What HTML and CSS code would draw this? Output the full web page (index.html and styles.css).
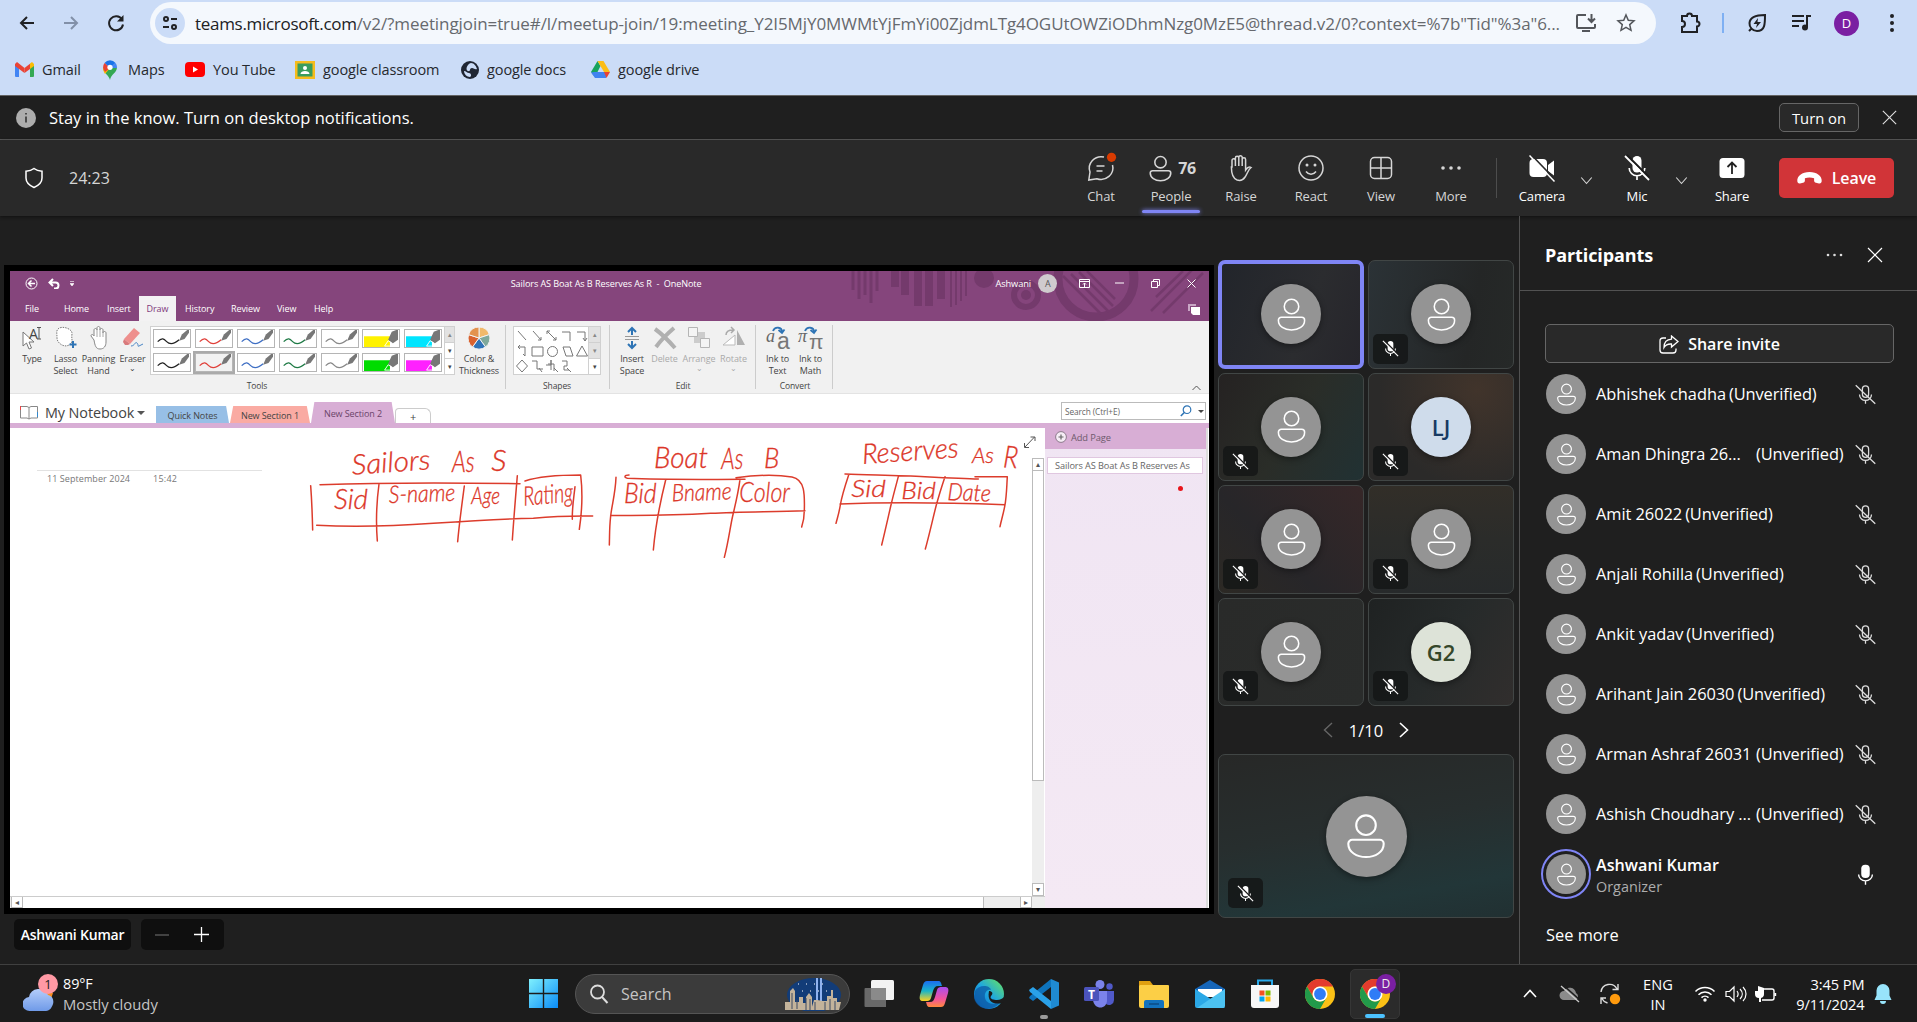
FILE: index.html
```html
<!DOCTYPE html>
<html lang="en">
<head>
<meta charset="utf-8">
<title>Microsoft Teams meeting</title>
<link rel="stylesheet" href="styles.css">
</head>
<body>
<svg class="defs" width="0" height="0" aria-hidden="true">
  <defs>
    <symbol id="person" viewBox="0 0 24 24"><g fill="none" stroke="currentColor"><circle cx="12" cy="6.8" r="4.7"/><path d="M5.4 13.8h13.2a1.9 1.9 0 0 1 1.9 1.9c0 4-4 6.4-8.5 6.4s-8.5-2.4-8.5-6.4a1.9 1.9 0 0 1 1.9-1.9z"/></g></symbol>
    <symbol id="mic-off" viewBox="0 0 20 20"><path fill="currentColor" d="M10 2a3 3 0 0 1 3 3v5a3 3 0 0 1-6 0V5a3 3 0 0 1 3-3z"/><path fill="none" stroke="currentColor" stroke-width="1.1" d="M4.8 10a5.2 5.2 0 0 0 10.4 0M10 15.2V18"/><path stroke="#1b1b1b" stroke-width="1.4" d="M3.2 1.3l15 15"/><path stroke="currentColor" stroke-width="1.2" d="M2 2l16 16"/></symbol>
    <symbol id="mic-off-line" viewBox="0 0 20 20"><g fill="none" stroke="currentColor" stroke-width="1.1"><rect x="7.3" y="2.5" width="5.4" height="10" rx="2.7"/><path d="M4.8 10a5.2 5.2 0 0 0 10.4 0M10 15.2V18M1.5 2l17 16"/></g></symbol>
    <symbol id="close" viewBox="0 0 20 20"><path fill="none" stroke="currentColor" stroke-width="1.2" d="M3 3l14 14M17 3L3 17"/></symbol>
    <symbol id="chev-down" viewBox="0 0 20 20"><path fill="none" stroke="currentColor" stroke-width="1.5" d="M3 6l7 8 7-8"/></symbol>
    <symbol id="pen" viewBox="0 0 38 19"><path fill="none" stroke="currentColor" stroke-width="1.4" d="M3 13c5-5 7-3 10 0s8 3 14-2"/><path fill="#777" d="M27 12l3-7 6-5h2v3l-5 7z"/></symbol>
    <symbol id="marker" viewBox="0 0 38 19"><path fill="currentColor" d="M0 7h29v12H0z"/><path fill="#777" d="M27 11l4-9 5-2h2v11l-6 4z"/><path fill="none" stroke="#fff" stroke-width="1" d="M27 12l-4 6h8l1-3z"/></symbol>
    <symbol id="chrome" viewBox="0 0 30 30"><circle cx="15" cy="15" r="15" fill="#fbc116"/><path fill="#e33b2e" d="M2 7.500a15 15 0 0 1 26 0H15a7.500 7.500 0 0 0-6.500 11.200z"/><path fill="#229a4a" d="M2 7.500A15 15 0 0 0 15 30l6.500-11.250a7.500 7.500 0 0 1-13 0z"/><circle cx="15" cy="15" r="7.500" fill="#fff"/><circle cx="15" cy="15" r="5.900" fill="#2f7cf6"/></symbol>
    <linearGradient id="sky" x1="0" y1="0" x2="1" y2="1"><stop offset="0" stop-color="#7ff0fd"/><stop offset="1" stop-color="#0a8cf8"/></linearGradient>
    <linearGradient id="edge" x1="0" y1="1" x2="1" y2="0"><stop offset="0" stop-color="#0b62c4"/><stop offset=".5" stop-color="#1ea7e0"/><stop offset="1" stop-color="#6be65a"/></linearGradient>
    <linearGradient id="cop1" x1="0" y1="0" x2="0" y2="1"><stop offset="0" stop-color="#1a6df0"/><stop offset=".5" stop-color="#19b5c8"/><stop offset="1" stop-color="#ffd21e"/></linearGradient>
    <linearGradient id="cop2" x1="0" y1="0" x2="0" y2="1"><stop offset="0" stop-color="#a94df0"/><stop offset=".6" stop-color="#f2539b"/><stop offset="1" stop-color="#ff8a3c"/></linearGradient>
    <linearGradient id="cloud" x1="0" y1="0" x2="0" y2="1"><stop offset="0" stop-color="#b4cdfa"/><stop offset="1" stop-color="#6f9ae8"/></linearGradient>
  </defs>
</svg>

<header class="chrome">
  <div class="omni-row">
    <span class="cell"><svg width="18" height="18" viewBox="0 0 18 18"><path d="M16 9H3M9 3L3 9l6 6" class="ln ln2"/></svg></span>
    <span class="cell dim"><svg width="18" height="18" viewBox="0 0 18 18"><path d="M2 9h13M9 3l6 6-6 6" class="ln ln2"/></svg></span>
    <span class="cell reload"><svg width="20" height="20" viewBox="0 0 20 20"><path d="M16 6.500A7 7 0 1 0 17 11.500" class="ln ln2"/><path d="M17.500 2v6.500H11z" fill="currentColor"/></svg></span>
    <div class="pill">
      <span class="tune"><svg width="18" height="18" viewBox="0 0 18 18"><g class="ln ln2"><circle cx="5" cy="5" r="2"/><path d="M10 5h6M2 13h6"/><circle cx="13" cy="13" r="2"/></g></svg></span>
      <span class="url"><b>teams.microsoft.com</b>/v2/?meetingjoin=true#/l/meetup-join/19:meeting_Y2I5MjY0MWMtYjFmYi00ZjdmLTg4OGUtOWZiODhmNzg0MzE5@thread.v2/0?context=%7b"Tid"%3a"6...</span>
      <span class="pill-ic"><svg width="22" height="20" viewBox="0 0 22 20"><path d="M11 2H3a1 1 0 0 0-1 1v11a1 1 0 0 0 1 1h16a1 1 0 0 0 1-1v-3M7 18h8M16.500 1v7M13 5.500l3.500 3.500L20 5.500" class="ln ln2"/></svg></span>
      <span class="pill-ic"><svg width="20" height="20" viewBox="0 0 20 20"><path d="M10 2l2.300 5.300 5.700.5-4.300 3.800 1.300 5.700-5-3-5 3 1.300-5.700L2 7.800l5.700-.5z" class="ln ln15"/></svg></span>
    </div>
    <span class="cell ext"><svg width="24" height="24" viewBox="0 0 24 24"><path d="M4 5h5a2.500 2.500 0 0 1 5 0h5v5.500a2.500 2.500 0 0 1 0 5V21H4v-5a3 3 0 0 0 0-6z" class="ln ln2"/></svg></span>
    <span class="vline"></span>
    <span class="cell"><svg width="22" height="22" viewBox="0 0 22 22"><path d="M19 3c0 9 0 16-8 16a7.500 7.500 0 0 1-7.500-8C4 5 10 3 19 3zM3 19l3-3" class="ln ln2"/><path d="M12 6l-4.500 6H11l-1 4 5-6h-3.500z" fill="currentColor"/></svg></span>
    <span class="cell"><svg width="22" height="20" viewBox="0 0 22 20"><path d="M1 3h12M1 8h12M1 13h7M16 14V3h4" class="ln ln2"/><circle cx="14" cy="14.500" r="3" fill="currentColor"/></svg></span>
    <span class="cell"><span class="me">D</span></span>
    <span class="cell"><svg width="6" height="20" viewBox="0 0 6 20" fill="currentColor"><circle cx="3" cy="3" r="2"/><circle cx="3" cy="10" r="2"/><circle cx="3" cy="17" r="2"/></svg></span>
  </div>
  <nav class="bookmarks">
    <a class="bm gmail"><svg width="19" height="15" viewBox="0 0 19 15"><path fill="#4285f4" d="M0 3h4v12H1a1 1 0 0 1-1-1z"/><path fill="#34a853" d="M15 3h4v11a1 1 0 0 1-1 1h-3z"/><path fill="#ea4335" d="M0 2l2-2 7.500 6V11L0 4z"/><path fill="#ea4335" d="M15 1.700V7l-5.500 4V6z"/><path fill="#fbbc04" d="M15 1.600L17 0l2 2v2l-4 3z"/></svg>Gmail</a>
    <a class="bm maps"><svg width="16" height="20" viewBox="0 0 16 20"><path fill="#34a853" d="M8 20c-1-5-7-7-7-12.500L15 7c0 6-6 7-7 13z"/><path fill="#1a73e8" d="M2.500 3A7 7 0 0 1 13.500 3L8 8z"/><path fill="#fbbc04" d="M1 7.500L8 8l-5 6C1.500 11.500 1 9.500 1 7.500z"/><path fill="#ea4335" d="M2.600 3L8 8l-5 4C.5 8 .7 5.500 2.600 3z"/><path fill="#4285f4" d="M13.500 3c1 1.500 1.600 2.500 1.500 5L8 8z"/><circle cx="8" cy="7.300" r="2.600" fill="#fff"/></svg>Maps</a>
    <a class="bm yt"><svg width="20" height="15" viewBox="0 0 20 15"><rect width="20" height="15" rx="4" fill="#f00"/><path fill="#fff" d="M8 4.500l5 3-5 3z"/></svg>You Tube</a>
    <a class="bm cls"><svg width="20" height="18" viewBox="0 0 20 18"><path fill="#f6bc1c" d="M0 0h20v18H0z"/><path fill="#3a9d5d" d="M2.500 2.500h15v13h-15z"/><circle cx="10" cy="7" r="2" fill="#fff"/><path fill="#fff" d="M5.500 13c0-4 9-4 9 0z"/></svg>google classroom</a>
    <a class="bm docs"><svg width="18" height="18" viewBox="0 0 18 18"><circle cx="9" cy="9" r="9" fill="#202633"/><path fill="#cbdcf7" d="M10 2c3 0 5 3 6 6-2 1-3-1-5-1-3 0-1 4-4 3S6 3 10 2zM3 10c2 0 3 2 5 2s3 3 1 4c-3 0-6-3-6-6z"/></svg>google docs</a>
    <a class="bm drv"><svg width="19" height="17" viewBox="0 0 19 17"><path fill="#18a35d" d="M6.500 0L9.500 5 4 16 0 11z"/><path fill="#fcbd17" d="M6.500 0H12.500L19 11H13z"/><path fill="#4183f0" d="M3.500 11H15.500L15 17H4L0 11.500z"/><path fill="#e94335" d="M13 11h6l-3.500 6z"/></svg>google drive</a>
  </nav>
</header>

<div class="notice">
  <svg class="info" width="20" height="20" viewBox="0 0 20 20"><circle cx="10" cy="10" r="10" fill="#adadad"/><path d="M10 8.500v6M10 5v1.500" stroke="#222" stroke-width="1.400"/></svg>
  <span class="notice-text">Stay in the know. Turn on desktop notifications.</span>
  <button class="turn-on">Turn on</button>
  <svg class="x" width="19" height="19"><use href="#close"/></svg>
</div>

<div class="bar">
  <svg class="shield" width="20" height="22" viewBox="0 0 20 22"><path d="M10 1.500c2.500 2 5 2.500 8 2.700V11c0 4.500-3.500 7.500-8 9.500-4.500-2-8-5-8-9.500V4.200c3-.2 5.500-.7 8-2.700z" fill="none" stroke="#fff" stroke-width="1.500"/></svg>
  <span class="timer">24:23</span>
  <div class="btn"><span class="ic"><svg width="28" height="28" viewBox="0 0 28 28"><g class="ln ln15"><path d="M17 3A12 11.500 0 0 0 3 18L1.800 26l8-1.300A12 11.500 0 0 0 25.500 11M9.500 12h8M9.500 17h6"/></g><circle cx="24.500" cy="3.300" r="4.600" fill="#d83b01"/></svg></span>Chat</div>
  <div class="btn on"><span class="ic"><svg width="29" height="29" stroke-width="1.300"><use href="#person"/></svg><b>76</b></span>People</div>
  <div class="btn"><span class="ic"><svg width="26" height="28" viewBox="0 0 26 28"><path class="ln ln15" d="M4 13V6.500a1.700 1.700 0 0 1 3.400 0V12 4a1.700 1.700 0 0 1 3.400 0v8V3.500a1.700 1.700 0 0 1 3.400 0V12 5.500a1.700 1.700 0 0 1 3.400 0V16c2-3 4-3.500 5.500-2.500-3 2-3.500 6-6 9.500-2 3-5 4-8 3-4-1.500-5.700-6-5.700-13z"/></svg></span>Raise</div>
  <div class="btn"><span class="ic"><svg width="28" height="28" viewBox="0 0 28 28"><circle cx="14" cy="14" r="12" class="ln ln15"/><path d="M9 17.500c2.500 3.500 7.500 3.500 10 0" class="ln ln15"/><circle cx="10" cy="11" r="1.500" fill="currentColor"/><circle cx="18" cy="11" r="1.500" fill="currentColor"/></svg></span>React</div>
  <div class="btn"><span class="ic"><svg width="24" height="24" viewBox="0 0 24 24"><rect x="1.500" y="1.500" width="21" height="21" rx="4" class="ln ln15"/><path d="M12 2v20M2 12h20" class="ln ln15"/></svg></span>View</div>
  <div class="btn"><span class="ic"><svg width="22" height="6" viewBox="0 0 22 6" fill="currentColor"><circle cx="3" cy="3" r="1.800"/><circle cx="11" cy="3" r="1.800"/><circle cx="19" cy="3" r="1.800"/></svg></span>More</div>
  <span class="sep"></span>
  <div class="btn lit"><span class="ic"><svg width="28" height="28" viewBox="0 0 28 28"><rect x="1.500" y="5" width="17.500" height="18" rx="4" fill="currentColor"/><path d="M20 11l6-4.500v15L20 17z" fill="currentColor"/><path d="M3 .5l25 26" stroke="#292929" stroke-width="1.800"/><path d="M1.500 1.500l25 26" stroke="currentColor" stroke-width="1.500"/></svg></span>Camera</div>
  <svg class="chev" width="15" height="15"><use href="#chev-down"/></svg>
  <div class="btn lit mic"><span class="ic"><svg width="30" height="30"><use href="#mic-off"/></svg></span>Mic</div>
  <svg class="chev" width="15" height="15"><use href="#chev-down"/></svg>
  <div class="btn lit share"><span class="ic"><svg width="26" height="22" viewBox="0 0 26 22"><rect x=".5" y="1" width="25" height="20" rx="3.500" fill="currentColor"/><path d="M13 17V6M8.500 10L13 5.500 17.500 10" stroke="#222" stroke-width="1.800" fill="none"/></svg></span>Share</div>
  <button class="leave"><svg width="25" height="13" viewBox="0 0 25 13"><path fill="#fff" d="M12.500 0C20 0 25 4 24.700 9c-.1 2-1.200 2.700-2.700 2.400l-3-.6c-1.300-.3-1.900-1-1.900-2.200V6.300c-3-1-6.200-1-9.200 0v2.300c0 1.200-.6 1.900-1.900 2.200l-3 .6C1.500 11.700.4 11 .3 9 0 4 5 0 12.500 0z"/></svg>Leave</button>
</div>

<main class="meeting">
  <section class="stage">
    <div class="frame">
      <div class="onenote">
        <div class="on-top">
          <svg class="deco" width="360" height="50" viewBox="0 0 360 50"><g fill="none" stroke="#743a6c"><path stroke-width="3" d="M2 0v19M8 0v28M14 0v24M20 0v32M26 0v20"/><path stroke-width="8" d="M44 0v16M54 0v24M67 0v35M78 0v35M90 0v28"/><path stroke-width="2" d="M100 0v36M105 0v34M110 0v30M115 0v25"/><circle cx="175" cy="24" r="12" stroke-width="6"/><circle cx="245" cy="8" r="38" stroke-width="9"/><path stroke-width="2.500" d="M212 5l38 38M220 3l38 38M228 1l34 34M236 0l28 28M300 40l42-42M312 42L352 2M305 26L332 0"/></g><circle cx="175" cy="24" r="5" fill="#743a6c"/><circle cx="133" cy="7" r="10" fill="#743a6c"/></svg>
          <div class="on-title">
            <span class="qa"><svg width="13" height="13" viewBox="0 0 13 13"><g fill="none" stroke="#fff"><circle cx="6.500" cy="6.500" r="5.500"/><path stroke-width="1.500" d="M10 6.500H3.500M6.500 3.500l-3 3 3 3"/></g></svg><svg width="12" height="11" viewBox="0 0 12 11"><path fill="none" stroke="#fff" stroke-width="2" d="M5 1L1.500 4.500 5 8M2 4.500h5.500a3 3 0 0 1 0 6H6"/></svg><svg width="4" height="5" viewBox="0 0 4 5"><path d="M0 .5h4M0 2.500h4L2 5z" fill="#fff" stroke="#fff" stroke-width=".6"/></svg></span>
            <span class="on-name">Sailors AS Boat As B Reserves As R&nbsp; - &nbsp;OneNote</span>
            <span class="on-user">Ashwani</span><span class="on-av">A</span>
            <span class="wc"><svg width="11" height="9" viewBox="0 0 11 9"><path fill="none" stroke="#fff" d="M.5.500h10v8H.5zM.5 2.500h10M5.500 8V4M4 5.500L5.500 4 7 5.500"/></svg></span>
            <span class="wc"><svg width="9" height="2"><path d="M0 1h9" stroke="#fff"/></svg></span>
            <span class="wc"><svg width="9" height="9" viewBox="0 0 9 9"><path fill="none" stroke="#fff" d="M.5 2.500h6v6h-6zM2.500 2V.5h6v6H7"/></svg></span>
            <span class="wc"><svg width="9" height="9" viewBox="0 0 9 9"><path stroke="#fff" d="M.5.500l8 8M8.500.500l-8 8"/></svg></span>
          </div>
          <div class="on-menu">
            <span class="m1">File</span><span class="m2">Home</span><span class="m3">Insert</span><span class="m4">Draw</span><span class="m5">History</span><span class="m6">Review</span><span class="m7">View</span><span class="m8">Help</span>
            <svg class="pages" width="12" height="11" viewBox="0 0 12 11"><path fill="#c9a6c5" d="M0 0h8v2H2v5H0z"/><path fill="#fff" d="M3 3h9v8H5l-2-2z"/></svg>
          </div>
        </div>
        <div class="ribbon">
          <div class="tool t-type"><svg width="22" height="24" viewBox="0 0 22 24"><path d="M2 6v14l3.500-3 2.500 6 2.500-1-2.500-6H13z" fill="#fff" stroke="#777"/><text x="8" y="13" class="glyph-a">A</text><path d="M16 1.500h4M16 13h4M18 1.500V13" stroke="#555" fill="none"/></svg>Type</div>
          <div class="tool t-lasso"><svg width="22" height="24" viewBox="0 0 22 24"><path d="M3 3c4-4 15 0 14 5s2 8-3 11-12-2-12-7-1-7 1-9z" fill="#fff" stroke="#777" stroke-dasharray="1.500 1"/><path d="M18 15v7M14.500 18.500h7" stroke="#2e74b5" stroke-width="2"/></svg>Lasso<br>Select</div>
          <div class="tool t-pan"><svg width="20" height="24" viewBox="0 0 20 24"><path d="M5 14L2 10c0-2 2-2 3 0V4c0-2 3-2 3 0V2c0-2 3-2 3 0v2c0-2 3-2 3 0v3c0-2 3-2 3 0v9c0 4-2 7-6 7s-5-3-6-9z" fill="#fff" stroke="#888"/><path d="M8 4v7M11 3v8M14 5v6" stroke="#aaa"/></svg>Panning<br>Hand</div>
          <div class="tool t-era"><svg width="22" height="24" viewBox="0 0 22 24"><path d="M2 13L12 2l6 5L8 18z" fill="#ee8f8d"/><path d="M2 13l6 5-2 1H3l-2-3z" fill="#d97a7c"/><path d="M9 20c4 0 4-5 6-3s0 4 2 3l4-2" fill="none" stroke="#4a86c5"/></svg>Eraser<br><i>⌄</i></div>
          <div class="gallery">
            <div class="pens">
              <span class="k"><svg><use href="#pen"/></svg></span><span class="r"><svg><use href="#pen"/></svg></span><span class="b"><svg><use href="#pen"/></svg></span><span class="g"><svg><use href="#pen"/></svg></span><span class="s"><svg><use href="#pen"/></svg></span><span class="yel"><svg><use href="#marker"/></svg></span><span class="cya"><svg><use href="#marker"/></svg></span>
              <span class="k"><svg><use href="#pen"/></svg></span><span class="r sel"><svg><use href="#pen"/></svg></span><span class="b"><svg><use href="#pen"/></svg></span><span class="g"><svg><use href="#pen"/></svg></span><span class="s"><svg><use href="#pen"/></svg></span><span class="grn"><svg><use href="#marker"/></svg></span><span class="mag"><svg><use href="#marker"/></svg></span>
            </div>
            <div class="spin"><span>▴</span><span class="w">▾</span><span class="w">▾</span></div>
          </div>
          <div class="tool t-col"><svg width="22" height="24" viewBox="0 0 22 24"><g stroke="#f1f1f1"><path fill="#f0b96a" d="M11 12V1a11 11 0 0 1 10.400 7.600z"/><path fill="#7fa99b" d="M11 12l10.400-3.400A11 11 0 0 1 17.500 21z"/><path fill="#2f73b8" d="M11 12l6.500 9a11 11 0 0 1-13 0z"/><path fill="#d9622f" d="M11 12l-6.500 9A11 11 0 0 1 .6 8.600z"/><path fill="#e3924e" d="M11 12L.6 8.600A11 11 0 0 1 11 1z"/></g></svg>Color &amp;<br>Thickness</div>
          <span class="rsep"></span>
          <div class="gallery shp">
            <svg width="74" height="47" viewBox="0 0 74 47"><g fill="none" stroke="#777"><path d="M4 4l8 9M19 4l8 9m0-3v3h-3M33 4l9 9M33 7V4h3M42 10v3h-3M48 5h8v9M63 5h8v9m-2-3l2 3 2-3M4 20h7v9M4 20l2-2M4 20l2 2M11 29l-2-2M18 20h11v9H18zM49 20h7l3 9h-7zM68 19l5.500 10h-11zM8 33l5.500 6L8 45l-5.500-6zM18 34h5v8h6M32 38h5v-5h0v10M34 37h6v7M48 34h5v5h-3v4h5"/><circle cx="38.500" cy="24.500" r="5"/><path d="M25 41l3 4M40 41l4 4M53 41l4 4"/></g></svg>
            <div class="spin"><span>▴</span><span>▾</span><span class="w">▾</span></div>
          </div>
          <span class="rsep s2"></span>
          <div class="tool t-ins"><svg width="18" height="24" viewBox="0 0 18 24"><path d="M2 10.500h14M2 13.500h14" stroke="#999"/><path d="M9 9V2M5 6l4-4 4 4M9 15v7M5 18l4 4 4-4" stroke="#2e74b5" stroke-width="2" fill="none"/></svg>Insert<br>Space</div>
          <div class="tool t-del off"><svg width="24" height="24" viewBox="0 0 24 24"><path d="M2 3c7 5 13 11 20 19M21 2C14 8 8 14 3 21" stroke="#b0b0b0" stroke-width="4" fill="none"/></svg>Delete</div>
          <div class="tool t-arr off"><svg width="24" height="24" viewBox="0 0 24 24"><path fill="#ccc" d="M7 6h11v11H7z"/><path fill="#f4f4f4" stroke="#b5b5b5" d="M1.500 1.500h9v9h-9zM13.500 12.500h9v9h-9z"/></svg>Arrange<br><i>⌄</i></div>
          <div class="tool t-rot off"><svg width="24" height="24" viewBox="0 0 24 24"><path d="M1 19h12V9z" fill="#fff" stroke="#bbb"/><path d="M15 4l8 15h-8z" fill="#b0b0b0"/><path d="M4 9c0-4 3-5 7-5M9 1l3 3-3 3" fill="none" stroke="#aaa" stroke-width="1.500"/></svg>Rotate<br><i>⌄</i></div>
          <span class="rsep s3"></span>
          <div class="tool t-i2t"><svg width="24" height="24" viewBox="0 0 24 24"><text x="0" y="16" class="ga1">a</text><text x="11" y="23" class="ga2">a</text><path d="M7 5c2-5 9-4 9 1M12.500 4l3.500 3 2.500-3.500" fill="none" stroke="#2e74b5" stroke-width="1.800"/></svg>Ink to<br>Text</div>
          <div class="tool t-i2m"><svg width="26" height="24" viewBox="0 0 26 24"><text x="0" y="16" class="ga1">π</text><text x="11" y="23" class="ga2 pi">π</text><path d="M7 5c2-5 9-4 9 1M12.500 4l3.500 3 2.500-3.500" fill="none" stroke="#2e74b5" stroke-width="1.800"/></svg>Ink to<br>Math</div>
          <span class="rsep s4"></span>
          <svg class="collapse" width="9" height="6" viewBox="0 0 9 6"><path d="M.5 5l4-4 4 4" fill="none" stroke="#555"/></svg>
          <div class="groups"><span class="gl1">Tools</span><span class="gl2">Shapes</span><span class="gl3">Edit</span><span class="gl4">Convert</span></div>
        </div>
        <div class="sections">
          <svg class="book" width="18" height="15" viewBox="0 0 18 15"><path fill="#fff" stroke="#888" d="M.5 1.500H7l2 1 2-1h6.500V13H11l-2 1-2-1H.5zM9 2.500V14"/><path stroke="#e44" d="M.5 1v4"/><path stroke="#38c" d="M17.500 7v5"/></svg>
          <span class="nb">My Notebook</span><span class="tri"></span>
          <span class="tab quick">Quick Notes</span><span class="tab sec1">New Section 1</span><span class="tab sec2">New Section 2</span><span class="tab plus">+</span>
          <div class="on-search"><span>Search (Ctrl+E)</span><svg width="12" height="12" viewBox="0 0 12 12"><circle cx="7" cy="4.700" r="3.800" fill="none" stroke="#2e74b5" stroke-width="1.200"/><path d="M4.300 7.500L.8 11" stroke="#2e74b5" stroke-width="1.600"/></svg><i></i></div>
        </div>
        <div class="on-body">
          <div class="page">
            <svg class="ink" width="1022" height="468" viewBox="0 0 1022 468">
              <path d="M27 42.500h225" stroke="#e2e2e2"/>
              <text class="stamp" x="37" y="53.500" textLength="83">11 September 2024</text><text class="stamp" x="143" y="53.500" textLength="24">15:42</text>
              <g transform="translate(270 2) scale(.33333)">
                <g class="stroke">
                  <path d="M120 164c150-5 400-6 600-3M735 153c30-10 90-18 167-18 6 50 4 110-4 163M110 286c110 6 240 2 350-6s200-14 300-15c60-6 110-8 178-7M92 167c3 40 5 90 6 133M297 162c-8 60-10 110-5 171M553 168c-8 60-15 110-20 167M712 137c-5 60-10 120-15 193M885 170c-3 30-9 60-8 98"/>
                </g>
                <g class="hand">
                  <text x="217" y="134" textLength="236" lengthAdjust="spacingAndGlyphs" transform="rotate(-4 217 134)" font-size="84">Sailors</text>
                  <text x="516" y="126" textLength="68" lengthAdjust="spacingAndGlyphs" font-size="86">As</text>
                  <text x="634" y="122" textLength="46" lengthAdjust="spacingAndGlyphs" font-size="88">S</text>
                  <text x="162" y="237" textLength="102" lengthAdjust="spacingAndGlyphs" font-size="84">Sid</text>
                  <text x="327" y="219" textLength="200" lengthAdjust="spacingAndGlyphs" transform="rotate(-2 327 219)">S-name</text>
                  <text x="574" y="223" textLength="86" lengthAdjust="spacingAndGlyphs">Age</text>
                  <text x="732" y="227" textLength="150" lengthAdjust="spacingAndGlyphs" transform="rotate(-5 732 227)" font-size="80">Rating</text>
                </g>
              </g>
              <g transform="translate(650 2) scale(.33333)">
                <g class="stroke">
                  <path d="M-132 142c-2 50-12 80-16 116s-3 55-4 87M17 150c-15 60-30 130-37 210M-93 135c-15 0-15 8-5 10 120 5 230 3 353 3M228 143c60-8 120-10 168-2 40 8 38 55 37 100 0 20-3 35-8 50M-148 256c100 1 200 0 300-6 90-6 180-4 283-8M240 148c-5 40-15 80-22 110s-13 80-25 124"/>
                  <path d="M555 132c80 3 160 4 240 8s120 6 160 7M945 140h97c-2 30-2 60-8 90s-10 40-14 60M566 135c-10 30-20 60-25 90s-8 35-13 55M540 222c160-7 330-4 495 2M715 140c-8 30-15 55-22 85s-18 80-28 120M855 140c-10 30-18 55-26 85s-20 85-33 132"/>
                </g>
                <g class="hand">
                  <text x="-18" y="115" textLength="162" lengthAdjust="spacingAndGlyphs" font-size="86">Boat</text>
                  <text x="184" y="117" textLength="66" lengthAdjust="spacingAndGlyphs" font-size="86">As</text>
                  <text x="312" y="115" textLength="46" lengthAdjust="spacingAndGlyphs" font-size="80">B</text>
                  <text x="-108" y="220" textLength="98" lengthAdjust="spacingAndGlyphs" font-size="80">Bid</text>
                  <text x="36" y="214" textLength="180" lengthAdjust="spacingAndGlyphs" transform="rotate(-2 36 214)">Bname</text>
                  <text x="238" y="216" textLength="152" lengthAdjust="spacingAndGlyphs" font-size="84">Color</text>
                  <text x="608" y="102" textLength="290" lengthAdjust="spacingAndGlyphs" transform="rotate(-4 608 102)" font-size="84">Reserves</text>
                  <text x="936" y="99" textLength="66" lengthAdjust="spacingAndGlyphs" font-size="66">As</text>
                  <text x="1028" y="112" textLength="44" lengthAdjust="spacingAndGlyphs" transform="rotate(4 1028 112)" font-size="92">R</text>
                  <text x="574" y="202" textLength="104" lengthAdjust="spacingAndGlyphs">Sid</text>
                  <text x="724" y="208" textLength="104" lengthAdjust="spacingAndGlyphs">Bid</text>
                  <text x="862" y="210" textLength="130" lengthAdjust="spacingAndGlyphs" transform="rotate(2 862 210)">Date</text>
                </g>
              </g>
            </svg>
            <div class="vs"><svg width="12" height="30" viewBox="0 0 12 30"><g transform="translate(-8 0)"><path d="M1 19L10.500 9M6.500 9h4.500v4M.5 15v4.500h4.500" stroke="#555" fill="none"/></g></svg><span class="sb">▴</span><span class="vthumb"></span><span class="vfill"></span><span class="sb">▾</span></div>
            <div class="hs"><span class="sb">◂</span><span class="hthumb"></span><span class="sb">▸</span></div>
          </div>
          <aside class="pagelist">
            <div class="addp"><svg width="12" height="12" viewBox="0 0 12 12"><circle cx="6" cy="6" r="5.400" fill="#f6edf6" stroke="#8d7a8c"/><path d="M6 3.500v5M3.500 6h5" stroke="#666" stroke-width="1.200"/></svg>Add Page</div>
            <div class="pg">Sailors AS Boat As B Reserves As</div>
            <span class="dot"></span>
          </aside>
        </div>
      </div>
    </div>
    <div class="chips"><span class="chip who">Ashwani Kumar</span><span class="chip zoom"><svg width="14" height="2"><path d="M0 1h14" stroke="#555" stroke-width="1.500"/></svg><svg width="15" height="15"><path d="M7.500 0v15M0 7.500h15" stroke="#fff" stroke-width="1.300"/></svg></span></div>
  </section>

  <section class="tiles">
    <div class="grid">
      <div class="tile a speaking"><span class="av"><svg><use href="#person"/></svg></span></div>
      <div class="tile b2"><span class="av"><svg><use href="#person"/></svg></span><span class="mute"><svg><use href="#mic-off"/></svg></span></div>
      <div class="tile c"><span class="av"><svg><use href="#person"/></svg></span><span class="mute"><svg><use href="#mic-off"/></svg></span></div>
      <div class="tile d"><span class="av lj">LJ</span><span class="mute"><svg><use href="#mic-off"/></svg></span></div>
      <div class="tile e"><span class="av"><svg><use href="#person"/></svg></span><span class="mute"><svg><use href="#mic-off"/></svg></span></div>
      <div class="tile f"><span class="av"><svg><use href="#person"/></svg></span><span class="mute"><svg><use href="#mic-off"/></svg></span></div>
      <div class="tile g3"><span class="av"><svg><use href="#person"/></svg></span><span class="mute"><svg><use href="#mic-off"/></svg></span></div>
      <div class="tile h"><span class="av g2x">G2</span><span class="mute"><svg><use href="#mic-off"/></svg></span></div>
    </div>
    <div class="pager"><svg width="10" height="16" viewBox="0 0 10 16"><path d="M9 1L1.500 8 9 15" fill="none" stroke="#666" stroke-width="1.400"/></svg><span>1/10</span><svg width="10" height="16" viewBox="0 0 10 16"><path d="M1 1l7.500 7L1 15" fill="none" stroke="#fff" stroke-width="1.600"/></svg></div>
    <div class="tile self"><span class="av"><svg><use href="#person"/></svg></span><span class="mute"><svg><use href="#mic-off"/></svg></span></div>
  </section>

  <aside class="people">
    <div class="p-head"><h2>Participants</h2><svg width="17" height="4" viewBox="0 0 17 4" fill="#ddd"><circle cx="2" cy="2" r="1.300"/><circle cx="8.500" cy="2" r="1.300"/><circle cx="15" cy="2" r="1.300"/></svg><svg class="px" width="20" height="20"><use href="#close"/></svg></div>
    <button class="invite"><svg width="20" height="19" viewBox="0 0 20 19"><path fill="none" stroke="#fff" stroke-width="1.300" d="M7 3H4a3 3 0 0 0-3 3v9a3 3 0 0 0 3 3h10a3 3 0 0 0 3-3v-1.500M12.500 1l6.500 5.500-6.500 5.500V9c-3.500-.2-6 .8-7.500 3.500C5 8 7.500 4.500 12.500 4.200z"/></svg>Share invite</button>
    <ul class="roster">
      <li><span class="pav"><svg><use href="#person"/></svg></span><span class="nm">Abhishek chadha</span><span class="uv">(Unverified)</span><svg class="pm"><use href="#mic-off-line"/></svg></li>
      <li><span class="pav"><svg><use href="#person"/></svg></span><span class="nm wide">Aman Dhingra 26...</span><span class="uv">(Unverified)</span><svg class="pm"><use href="#mic-off-line"/></svg></li>
      <li><span class="pav"><svg><use href="#person"/></svg></span><span class="nm">Amit 26022</span><span class="uv">(Unverified)</span><svg class="pm"><use href="#mic-off-line"/></svg></li>
      <li><span class="pav"><svg><use href="#person"/></svg></span><span class="nm">Anjali Rohilla</span><span class="uv">(Unverified)</span><svg class="pm"><use href="#mic-off-line"/></svg></li>
      <li><span class="pav"><svg><use href="#person"/></svg></span><span class="nm">Ankit yadav</span><span class="uv">(Unverified)</span><svg class="pm"><use href="#mic-off-line"/></svg></li>
      <li><span class="pav"><svg><use href="#person"/></svg></span><span class="nm">Arihant Jain 26030</span><span class="uv">(Unverified)</span><svg class="pm"><use href="#mic-off-line"/></svg></li>
      <li><span class="pav"><svg><use href="#person"/></svg></span><span class="nm wide">Arman Ashraf 26031</span><span class="uv">(Unverified)</span><svg class="pm"><use href="#mic-off-line"/></svg></li>
      <li><span class="pav"><svg><use href="#person"/></svg></span><span class="nm wide">Ashish Choudhary ...</span><span class="uv">(Unverified)</span><svg class="pm"><use href="#mic-off-line"/></svg></li>
      <li><span class="pav ring"><svg><use href="#person"/></svg></span><span class="org"><b>Ashwani Kumar</b><small>Organizer</small></span><svg class="pm" viewBox="0 0 20 20"><rect x="6.300" y="1.500" width="7.400" height="11.500" rx="3.500" fill="#fff"/><path d="M4 10a6 5.500 0 0 0 12 0M10 15.500V19" fill="none" stroke="#fff" stroke-width="1.200"/></svg></li>
    </ul>
    <a class="more">See more</a>
  </aside>
</main>

<footer class="taskbar">
  <div class="weather"><span class="wic"><svg width="34" height="38" viewBox="0 0 34 38"><path fill="#f78b1e" d="M23 18h7l-2 6h-5z"/><path fill="url(#cloud)" d="M7 36a7 7 0 0 1-1-14 10 10 0 0 1 19-2c5 1 6 6 5 9s-3 7-7 7z"/></svg><i>1</i></span><span class="wt">89°F<small>Mostly cloudy</small></span></div>
  <svg class="start" width="29" height="29" viewBox="0 0 29 29"><path fill="url(#sky)" d="M0 0h13.800v13.800H0zM15.200 0H29v13.800H15.200zM0 15.200h13.800V29H0zM15.200 15.200H29V29H15.200z"/></svg>
  <div class="tsearch"><svg width="20" height="20" viewBox="0 0 20 20"><circle cx="8.500" cy="8" r="6.500" fill="none" stroke="#ddd" stroke-width="1.800"/><path d="M13 13l5.500 6" stroke="#ddd" stroke-width="2"/></svg><span>Search</span>
    <svg class="city" width="58" height="34" viewBox="0 0 58 34"><ellipse cx="30" cy="18" rx="27" ry="17" fill="#123c78"/><path fill="#8fb2ef" d="M32 1h2v30h-2zM36 1h2v30h-2z"/><path fill="#c3b39b" d="M1 25h5V14l3-3 2 3v11h4v-5h4v6h3V20l3-4 3 4v13H1zM39 24h4v-5h4v-6h2v8h4v4h4l-2 8H27l3-10h3z"/><path stroke="#3d4a63" d="M8 16v16M13 23v9M22 21v12M26 22v11M41 25v8M46 22v11M51 24v9M31 25v8"/><path stroke="#fff" stroke-dasharray="1 7" d="M14 7h30M18 14h30"/></svg></div>
  <span class="app"><svg width="30" height="30" viewBox="0 0 30 30"><rect x="7" y="1" width="23" height="20" rx="1.500" fill="#f3f3f3"/><path d="M1.500 9H22v19H1.500a1 1 0 0 1-1-1V10a1 1 0 0 1 1-1z" fill="#777" opacity=".85"/></svg></span>
  <span class="app"><svg width="30" height="30" viewBox="0 0 30 30"><path fill="url(#cop1)" d="M8 2h11c3 0 3 2 4 5h-4c-3 0-4 2-5 5l-2 7c-1 3-3 3-5 3H4c-3 0-4-2-3-6L4 6c1-3 2-4 4-4z"/><path fill="url(#cop2)" d="M22 28H11c-3 0-3-2-4-5h4c3 0 4-2 5-5l2-7c1-3 3-3 5-3h3c3 0 4 2 3 6l-3 10c-1 3-2 4-4 4z"/></svg></span>
  <span class="app"><svg width="30" height="30" viewBox="0 0 30 30"><circle cx="15" cy="15" r="15" fill="url(#edge)"/><path fill="#0c59a4" d="M1 12c4-7 15-6 16-1-4-1-7 3-6 8s7 7 13 5c2 0 2 0 1 1-8 8-22 6-25-6z" opacity=".75"/><path fill="#1c1c1c" d="M16 12c3 1 3 3 1 5-2 3 3 4 6 4s6-2 7-3v5c-5 3-18 3-15-11z"/></svg></span>
  <span class="app run"><svg width="30" height="30" viewBox="0 0 30 30"><path fill="#1f8ad2" d="M22 0l8 3.500v23L22 30z"/><path fill="#0e74bd" d="M22 0v8L4 22l-4-3 1-2z"/><path fill="#2aa1e8" d="M22 30v-8L4 8 0 11l1 2z"/></svg></span>
  <span class="app"><svg width="30" height="30" viewBox="0 0 30 30"><circle cx="16" cy="5.500" r="4.500" fill="#7b83eb"/><circle cx="25.500" cy="7.500" r="3.200" fill="#5059c9"/><path fill="#5059c9" d="M20 12h10v9a5 5 0 0 1-8 4z"/><path fill="#7b83eb" d="M9 12h14v9c0 10-13 10-14 0z"/><rect y="8" width="15" height="14" rx="1.500" fill="#4b53bc"/><text x="4" y="19.500" class="tm">T</text></svg></span>
  <span class="app"><svg width="30" height="28" viewBox="0 0 30 28"><path fill="#e0a011" d="M0 1h11l3 4v5H0z"/><path fill="#fccf46" d="M1 5h28a1 1 0 0 1 1 1v20a2 2 0 0 1-2 2H2a2 2 0 0 1-2-2V6z"/><path fill="#1272bd" d="M5 28v-6a2 2 0 0 1 2-2h16a2 2 0 0 1 2 2v6z"/><path stroke="#0b4c86" stroke-width="1.500" d="M10 24h10"/></svg></span>
  <span class="app"><svg width="30" height="28" viewBox="0 0 30 28"><path fill="#1565b8" d="M0 9L15 0l15 9v6H0z"/><path fill="#fff" d="M3 9h24v8H3z"/><path fill="#2ba8e6" d="M0 9l30 19H2a2 2 0 0 1-2-2z"/><path fill="#4cc2f1" d="M30 9L15 19 2 28h26a2 2 0 0 0 2-2z"/></svg></span>
  <span class="app"><svg width="30" height="30" viewBox="0 0 30 30"><path d="M8 6V1.500h14V6" fill="none" stroke="#29a9ea" stroke-width="2"/><path fill="#f7f7f7" d="M1 6h28v20a3 3 0 0 1-3 3H4a3 3 0 0 1-3-3z"/><path fill="#f25022" d="M9.500 11.500h5v5h-5z"/><path fill="#7fba00" d="M15.500 11.500h5v5h-5z"/><path fill="#00a4ef" d="M9.500 17.500h5v5h-5z"/><path fill="#ffb900" d="M15.500 17.500h5v5h-5z"/></svg></span>
  <span class="app"><svg width="30" height="30"><use href="#chrome"/></svg></span>
  <span class="app active"><svg width="30" height="30"><use href="#chrome"/></svg><i>D</i></span>
  <div class="tray">
    <span class="t1"><svg width="14" height="9" viewBox="0 0 14 9"><path d="M1 8l6-6.500L13 8" fill="none" stroke="#fff" stroke-width="1.600"/></svg></span>
    <span class="t1"><svg width="22" height="18" viewBox="0 0 22 18"><path fill="#8b8b8b" d="M5 15a4.500 4.500 0 0 1 0-9 6.500 6.500 0 0 1 12 2 4 4 0 0 1 0 7z"/><path stroke="#1c1c1c" stroke-width="1.500" d="M4 0l18 16"/><path stroke="#ccc" stroke-width="1.300" d="M2 1l18 16"/></svg></span>
    <span class="t1"><svg width="22" height="22" viewBox="0 0 22 22"><path d="M2 9a8.500 8.500 0 0 1 16-3M19 1v5.500h-5.500M2 21v-6h5M2.500 15c1 2 3 4 6 5" fill="none" stroke="#ddd" stroke-width="1.400"/><circle cx="16" cy="16" r="5.200" fill="#ff9a0d"/></svg></span>
    <span class="lang">ENG<br>IN</span>
    <span class="t2"><svg width="22" height="17" viewBox="0 0 22 17"><g fill="none" stroke="#fff" stroke-width="1.500"><path d="M1.500 6.500a13.500 13.500 0 0 1 19 0M4.500 9.700a9 9 0 0 1 13 0M7.500 12.600a5 5 0 0 1 7 0"/></g><circle cx="11" cy="15" r="1.700" fill="#fff"/></svg></span>
    <span class="t2"><svg width="22" height="18" viewBox="0 0 22 18"><path d="M1 6.500h3.500L9 2v14l-4.500-4.500H1zM12 6c1.500 2 1.500 4 0 6M15 4c3 3 3 7 0 10M18 2c4 4 4 10 0 14" fill="none" stroke="#fff" stroke-width="1.200"/></svg></span>
    <span class="t2"><svg width="22" height="18" viewBox="0 0 22 18"><path d="M8 4h9a2 2 0 0 1 2 2v7a2 2 0 0 1-2 2H7M20.500 8v3" fill="none" stroke="#fff" stroke-width="1.400"/><path d="M3 1v5H0v3a4 4 0 0 0 4 4v4h2v-4a4 4 0 0 0 3-4V3z" fill="#fff"/></svg></span>
    <span class="clock">3:45 PM<br>9/11/2024</span>
    <svg class="bell" width="18" height="20" viewBox="0 0 18 20"><path fill="#98e4fb" d="M9 0a6.500 6.500 0 0 1 6.500 6.500v5L17.500 16H.5l2-4.500v-5A6.500 6.500 0 0 1 9 0zM6 17h6a3 3 0 0 1-6 0z"/></svg>
  </div>
</footer>
</body>
</html>
```
FILE: styles.css
```css
* { box-sizing: border-box; }
html, body { margin: 0; height: 1022px; overflow: hidden; }
body { width: 1917px; background: #1f1f1f; color: #fff; font-family: "Open Sans", "Noto Sans", sans-serif; font-size: 16px; display: flex; flex-direction: column; white-space: nowrap; }
button { font: inherit; letter-spacing: inherit; color: inherit; padding: 0; cursor: pointer; }
svg { display: block; flex: none; }
.defs { position: absolute; }
.ln { fill: none; stroke: currentColor; }
.ln2 { stroke-width: 2; }
.ln15 { stroke-width: 1.5; }

/* browser chrome */
.chrome { height: 95px; background: #cbdcf7; color: #202124; flex: none; }
.omni-row { display: flex; align-items: center; height: 46px; padding-left: 5px; }
.cell { width: 45px; flex: none; display: flex; justify-content: center; align-items: center; }
.cell.dim { color: #8290a8; width: 44px; }
.cell:first-child { width: 44px; }
.reload { width: 46px; }
.pill { width: 1506px; height: 42px; margin-left: 11px; border-radius: 21px; background: #f4f8fd; display: flex; align-items: center; padding-left: 5px; flex: none; }
.tune { width: 30px; height: 30px; border-radius: 50%; background: #cbdcf7; display: flex; align-items: center; justify-content: center; }
.url { margin-left: 10px; width: 1370px; font-size: 17px; color: #66696e; letter-spacing: -.08px; }
.url b { font-weight: 400; color: #202124; letter-spacing: -.3px; }
.pill-ic { width: 39px; color: #53565b; display: flex; justify-content: center; margin-left: 1px; }
.ext { margin-left: 12px; width: 44px; }
.vline { width: 2px; height: 20px; background: #7fb0f3; margin: 0 10px; }
.me { width: 25px; height: 25px; border-radius: 50%; background: #7a1fa2; color: #fff; font-size: 13px; display: flex; align-items: center; justify-content: center; }
.bookmarks { display: flex; height: 47px; align-items: center; padding-left: 15px; font-size: 14.5px; letter-spacing: -.1px; color: #26292e; }
.bm { display: flex; align-items: center; gap: 8px; flex: none; }
.gmail { width: 87px; } .maps { width: 83px; gap: 10px; } .yt { width: 110px; } .cls { width: 166px; } .docs { width: 130px; }

/* notification strip */
.notice { height: 45px; border-top: 1px solid #636363; border-bottom: 1px solid #5f5f5f; background: #1f1f1f; display: flex; align-items: center; padding-left: 16px; flex: none; }
.notice-text { margin-left: 13px; width: 1730px; font-size: 16.5px; }
.turn-on { width: 80px; height: 29px; border: 1px solid #666; border-radius: 5px; background: #292929; font-size: 14.8px; }
.x { margin-left: 21px; color: #ddd; }

/* meeting toolbar */
.bar { height: 76px; background: #292929; display: flex; align-items: center; padding-left: 24px; color: #d6d6d6; flex: none; box-shadow: 0 1px 3px #111; }
.timer { margin-left: 25px; width: 997px; font-size: 16px; }
.btn { width: 70px; height: 76px; flex: none; display: flex; flex-direction: column; align-items: center; font-size: 13px; line-height: 18px; letter-spacing: -.15px; position: relative; }
.ic { height: 30px; margin: 13px 0 4px; display: flex; align-items: center; gap: 3px; }
.ic b { font-size: 16px; font-weight: 700; letter-spacing: -.5px; }
.ic svg { overflow: visible; }
.on::after { content: ""; position: absolute; left: 6px; bottom: 3px; width: 58px; height: 3px; border-radius: 2px; background: #7f85f5; box-shadow: 0 0 4px #7f85f5; }
.sep { width: 1px; height: 40px; background: #4d4d4d; margin: 0 10px 0 10px; }
.lit { color: #fff; }
.chev { margin: 4px 9px 0 2px; }
.mic { margin-left: -1px; }
.share { margin-left: -1px; }
.leave { margin-left: 12px; width: 115px; height: 40px; border: 0; border-radius: 5px; background: #d13438; color: #fff; font-weight: 600; font-size: 16px; letter-spacing: -.1px; display: flex; align-items: center; justify-content: center; gap: 10px; }

/* shared stage */
.meeting { display: flex; height: 748px; flex: none; }
.stage { width: 1214px; padding: 49px 0 0 4px; flex: none; }
.frame { height: 649px; background: #000; padding: 6px 5px 6px 6px; }
.onenote { height: 637px; background: #fff; color: #444; font-size: 9px; letter-spacing: -.1px; display: flex; flex-direction: column; }
.on-top { height: 50px; background: #85457c; color: #fff; position: relative; }
.deco { position: absolute; left: 841px; top: 0; }
.on-title { height: 24px; margin-bottom: 1px; display: flex; align-items: center; position: relative; }
.qa { width: 501px; padding-left: 15px; display: flex; align-items: center; gap: 10px; }
.on-name { width: 485px; font-size: 9.1px; }
.on-user { width: 43px; font-size: 9.3px; }
.on-av { width: 19px; height: 19px; border-radius: 50%; background: #cfcbce; color: #555; display: flex; align-items: center; justify-content: center; margin-right: 9px; }
.wc { width: 35.7px; display: flex; justify-content: center; }
.on-menu { height: 25px; display: flex; align-items: stretch; line-height: 26px; position: relative; }
.m1 { width: 54px; padding-left: 15px; } .m2 { width: 43px; } .m3 { width: 32px; } .m4 { width: 37px; background: #f3f2f3; color: #80397b; text-align: center; } .m5 { width: 55px; padding-left: 9px; } .m6 { width: 46px; } .m7 { width: 37px; } .m8 { width: 874px; }
.pages { margin-top: 8px; }
.ribbon { height: 73px; background: #f1f1f1; display: flex; position: relative; padding-top: 5px; border-bottom: 1px solid #e3e3e3; flex: none; }
.tool { text-align: center; line-height: 12px; display: flex; flex-direction: column; align-items: center; width: 34px; flex: none; color: #444; }
.tool svg { margin-bottom: 3px; overflow: visible; }
.tool i { font-style: normal; font-size: 8px; line-height: 6px; }
.tool.off { color: #aaa; }
.t-type { margin-left: 5px; }
.t-era { width: 35px; }
.t-lasso, .t-pan { width: 33px; }
.glyph-a { font: 14px "Open Sans", sans-serif; fill: #444; }
.ga1 { font: italic 18px "Liberation Serif", serif; fill: #666; }
.ga2 { font: 23px "Liberation Sans", sans-serif; fill: #777; }
.pi { font-size: 21px; }
.gallery { height: 49px; border: 1px solid #d0d0d0; background: #fff; display: flex; flex: none; width: 305px; }
.pens { display: grid; grid-template-columns: repeat(7, 41.9px); grid-auto-rows: 24px; width: 293px; padding-left: 1px; }
.pens span { border: 1px solid #b5b5b5; width: 38px; height: 19px; margin: 2px 0 0 1px; }
.pens svg { width: 36px; height: 17px; }
.pens .sel { outline: 2px solid #aaa; background: #f2f2f2; }
.k { color: #222; } .r { color: #e0403a; } .b { color: #3f6fc4; } .g { color: #1e7a45; } .s { color: #888; }
.yel { color: #fff200; } .cya { color: #00e5ff; } .grn { color: #00dc00; } .mag { color: #ff21ff; }
.spin { width: 12px; display: flex; flex-direction: column; border-left: 1px solid #d0d0d0; margin-left: auto; }
.spin span { flex: 1; background: #e2e2e2; font-size: 7px; line-height: 15px; text-align: center; color: #888; border-bottom: 1px solid #d0d0d0; }
.spin .w { background: #fff; color: #444; }
.t-col { width: 48px; }
.rsep { width: 1px; height: 64px; background: #ccc; margin: -1px 7px 0 2px; flex: none; }
.shp { width: 88px; }
.s2 { margin: -1px 6px 0 8px; }
.t-ins { width: 32px; } .t-arr { width: 36px; } .t-del { width: 33px; } .t-rot { width: 33px; }
.s3 { margin: -1px 5px 0 5px; }
.t-i2m, .t-i2t { width: 33px; }
.s4 { margin-left: 5px; }
.collapse { margin: 59px 0 0 352px; }
.groups { position: absolute; left: 0; bottom: 0; height: 14px; line-height: 13px; display: flex; font-size: 8.5px; text-align: center; }
.gl1 { width: 494px; } .gl2 { width: 106px; } .gl3 { width: 146px; } .gl4 { width: 78px; }
.sections { height: 34px; border-bottom: 5px solid #d8aed5; display: flex; align-items: flex-end; flex: none; }
.book { margin: 0 7px 3px 10px; }
.nb { font-size: 14.4px; width: 88px; line-height: 19px; height: 20px; letter-spacing: -.1px; }
.tri { border: 4px solid transparent; border-top-color: #555; border-bottom: 0; margin: 0 11px 8px 4px; }
.tab { height: 17px; line-height: 20px; text-align: center; clip-path: polygon(4% 0, 96% 0, 100% 100%, 0 100%); }
.quick { width: 73px; margin-right: 1px; background: #97bfe6; clip-path: polygon(0 0, 96% 0, 100% 100%, 0 100%); }
.sec1 { width: 80px; background: #faaba3; margin-right: 1px; }
.sec2 { width: 84px; height: 21px; line-height: 24px; background: #d8aed5; color: #6b4469; }
.plus { width: 36px; height: 15px; line-height: 15px; font-size: 11px; border: 1px solid #ccc; border-bottom: 0; border-radius: 4px 6px 0 0; clip-path: none; }
.on-search { margin: 0 3px 3px auto; width: 145px; height: 18px; border: 1px solid #bbb; display: flex; align-items: center; padding-left: 3px; font-size: 8.3px; }
.on-search span { width: 115px; color: #666; }
.on-search i { border: 3px solid transparent; border-top-color: #444; border-bottom: 0; margin-left: 6px; }
.on-body { display: flex; flex: 1; min-height: 0; }
.page { width: 1035px; display: grid; grid-template-columns: 1022px 13px; grid-template-rows: 468px 12px; }
.ink { overflow: visible; }
.stroke { fill: none; stroke: #dc3c2c; stroke-width: 4.5; stroke-linecap: round; stroke-linejoin: round; }
.hand text { fill: #dc3527; font-family: "Lato", "Open Sans", sans-serif; font-style: italic; font-weight: 300; letter-spacing: 0; stroke: #dc3527; stroke-width: 1; }
.hand text:not([font-size]) { font-size: 72px; }
.stamp { font-size: 9px; fill: #777; letter-spacing: 0; }
.vs { display: flex; flex-direction: column; }
.vs svg { overflow: visible; }
.sb { width: 12px; height: 13px; border: 1px solid #bbb; background: #fff; font-size: 8px; line-height: 10px; text-align: center; color: #555; flex: none; }
.vthumb { width: 12px; height: 310px; border: 1px solid #bbb; border-top: 0; }
.vfill { flex: 1; width: 12px; background: #eee; }
.hs { grid-column: 1 / 3; display: flex; background: #eee; border-top: 1px solid #ccc; padding-left: 1px; }
.hs .sb { height: 11px; border-top: 0; line-height: 9px; }
.hthumb { width: 961px; background: #fff; border-right: 1px solid #bbb; margin-right: 36px; }
.pagelist { width: 163px; background: linear-gradient(#f0e5f3, #f4e9f4); border-right: 2px solid #ddd; }
.addp { height: 21px; background: #d8aed5; display: flex; align-items: center; gap: 4px; padding: 0 0 3px 10px; font-size: 9.3px; color: #6d5a6c; }
.pg { margin: 8px 3px 0 2px; height: 17px; background: #fff; border: 1px solid #e0c7e0; line-height: 15px; padding-left: 7px; font-size: 9.2px; color: #666; }
.dot { display: block; width: 5px; height: 5px; border-radius: 50%; background: #e8151b; margin: 12px 0 0 133px; }
.chips { display: flex; gap: 10px; padding: 5px 0 0 10px; }
.chip { height: 31px; border-radius: 5px; background: #0f0f0f; display: flex; align-items: center; justify-content: center; }
.who { width: 117px; font-size: 14px; font-weight: 600; letter-spacing: -.2px; }
.zoom { width: 83px; gap: 25px; padding-right: 1px; }

/* video tiles */
.tiles { width: 305px; padding: 44px 0 0 4px; flex: none; }
.grid { display: grid; grid-template-columns: 146px 146px; gap: 4px; grid-auto-rows: 108.5px; }
.tile { border: 1px solid #414645; border-radius: 7px; display: flex; align-items: center; justify-content: center; position: relative; }
.av { width: 60px; height: 60px; border-radius: 50%; background: #949494; display: flex; align-items: center; justify-content: center; box-shadow: 0 2px 6px #0006; font-weight: 600; font-size: 22px; }
.av svg { width: 37px; height: 37px; stroke-width: 1; }
.lj { background: #cfdceb; color: #173a63; }
.g2x { background: #dde3d8; color: #35472a; }
.mute { position: absolute; left: 4px; bottom: 4px; width: 35px; height: 30px; border-radius: 5px; background: #141616d9; display: flex; align-items: center; justify-content: center; }
.mute svg { width: 19px; height: 19px; }
.speaking { border: 4px solid #7f85f5; }
.a { background: linear-gradient(110deg, #22252b, #2b2c2f 60%, #26252b); }
.b2 { background: linear-gradient(100deg, #2b3236, #242626 70%, #262928); }
.c { background: linear-gradient(120deg, #252222, #2a2d28 50%, #213133); }
.d { background: radial-gradient(circle at 75% 15%, #41342b, #2b2a29 70%); }
.e { background: linear-gradient(45deg, #2c2924, #272629 40%, #362728); }
.f { background: linear-gradient(#322e28, #2b2c2a 50%, #272a2b); }
.g3 { background: linear-gradient(120deg, #292a29, #2a2c2b); }
.h { background: linear-gradient(120deg, #1f2222, #262a2a 50%, #312e2d); }
.pager { height: 48px; display: flex; align-items: center; justify-content: center; gap: 14px; font-size: 16.5px; width: 296px; }
.pager span { width: 38px; text-align: center; }
.self { width: 296px; height: 164px; background: linear-gradient(170deg, #272827, #272e2e 45%, #223638 80%, #213032); }
.self .av { width: 81px; height: 81px; }
.self .av svg { width: 50px; height: 50px; }
.self .mute { left: 9px; bottom: 9px; }

/* participants panel */
.people { flex: 1; border-left: 1px solid #525252; }
.p-head { height: 75px; border-bottom: 1px solid #525252; display: flex; align-items: center; padding: 4px 0 0 25px; }
h2 { margin: 0; font-size: 18px; font-weight: 700; width: 281px; letter-spacing: -.1px; }
.px { margin-left: 22px; }
.invite { display: flex; align-items: center; justify-content: center; gap: 9px; margin: 33px 0 11px 25px; padding-top: 1px; width: 349px; height: 39px; border: 1px solid #666; border-radius: 5px; background: #292929; font-weight: 600; }
.roster { list-style: none; margin: 0; padding: 0 0 0 26px; }
.roster li { height: 60px; display: flex; align-items: flex-start; }
.pav { width: 40px; height: 40px; border-radius: 50%; background: #949494; display: flex; align-items: center; justify-content: center; margin-right: 10px; flex: none; }
.pav svg { width: 25px; height: 25px; stroke-width: 1.1; }
.ring { outline: 2px solid #7f85f5; outline-offset: 3px; }
.nm, .uv { line-height: 40px; font-size: 16.4px; letter-spacing: -.1px; }
.nm { letter-spacing: -.05px; }
.uv { margin-left: 3px; }
.wide { width: 157px; }
.pm { width: 23px; height: 23px; margin: 9px 40px 0 auto; color: #ddd; }
.org { display: flex; flex-direction: column; line-height: 22px; }
.org b { font-weight: 600; font-size: 16.2px; }
.org small { color: #adadad; font-size: 14.4px; }
.more { display: block; margin: -1px 0 0 26px; line-height: 44px; font-size: 16.4px; }

/* taskbar */
.taskbar { height: 58px; background: #1c1c1c; border-top: 1px solid #404040; display: flex; align-items: center; flex: none; padding-left: 23px; }
.weather { display: flex; width: 506px; align-items: center; }
.wic { position: relative; width: 40px; }
.wic i { position: absolute; left: 15px; top: -1px; width: 20px; height: 20px; border-radius: 50%; background: #ff99a4; color: #222; font-style: normal; font-size: 13px; line-height: 20px; text-align: center; }
.wt { font-size: 14.4px; line-height: 20px; letter-spacing: -.1px; }
.wt small { display: block; font-size: 14.8px; letter-spacing: 0; color: #c5c5c5; }
.tsearch { width: 275px; height: 40px; border-radius: 20px; border: 1px solid #555; background: #3b3b3b; margin: 0 4px 0 17px; display: flex; align-items: center; padding-left: 13px; color: #c5c5c5; }
.tsearch span { margin-left: 12px; width: 163px; font-size: 16px; }
.app { width: 50px; height: 50px; margin-right: 5.1px; display: flex; align-items: center; justify-content: center; position: relative; flex: none; }
.run::after { content: ""; position: absolute; bottom: 0; left: 21px; width: 8px; height: 4px; border-radius: 2px; background: #9a9a9a; }
.active { background: #2b2b2b; border: 1px solid #363636; border-radius: 5px; }
.active::after { content: ""; position: absolute; bottom: 0; left: 14px; width: 20px; height: 4px; border-radius: 2px; background: #4cc2ff; }
.active i { position: absolute; right: 3px; top: 4px; width: 20px; height: 20px; border-radius: 50%; background: #7a1fa2; color: #eee; font: 12px/20px "Open Sans", sans-serif; text-align: center; }
.tm { font: 700 12px "Open Sans", sans-serif; fill: #fff; }
.tray { display: flex; align-items: center; margin-left: 105px; }
.t1 { width: 40px; display: flex; justify-content: center; }
.lang { width: 56px; text-align: center; font-size: 14.6px; line-height: 20px; }
.t2 { width: 30.5px; display: flex; justify-content: center; }
.lang + .t2 { margin-left: 4px; }
.clock { width: 83px; text-align: right; font-size: 14.6px; line-height: 20px; letter-spacing: -.1px; }
.bell { margin-left: 10px; }
```
